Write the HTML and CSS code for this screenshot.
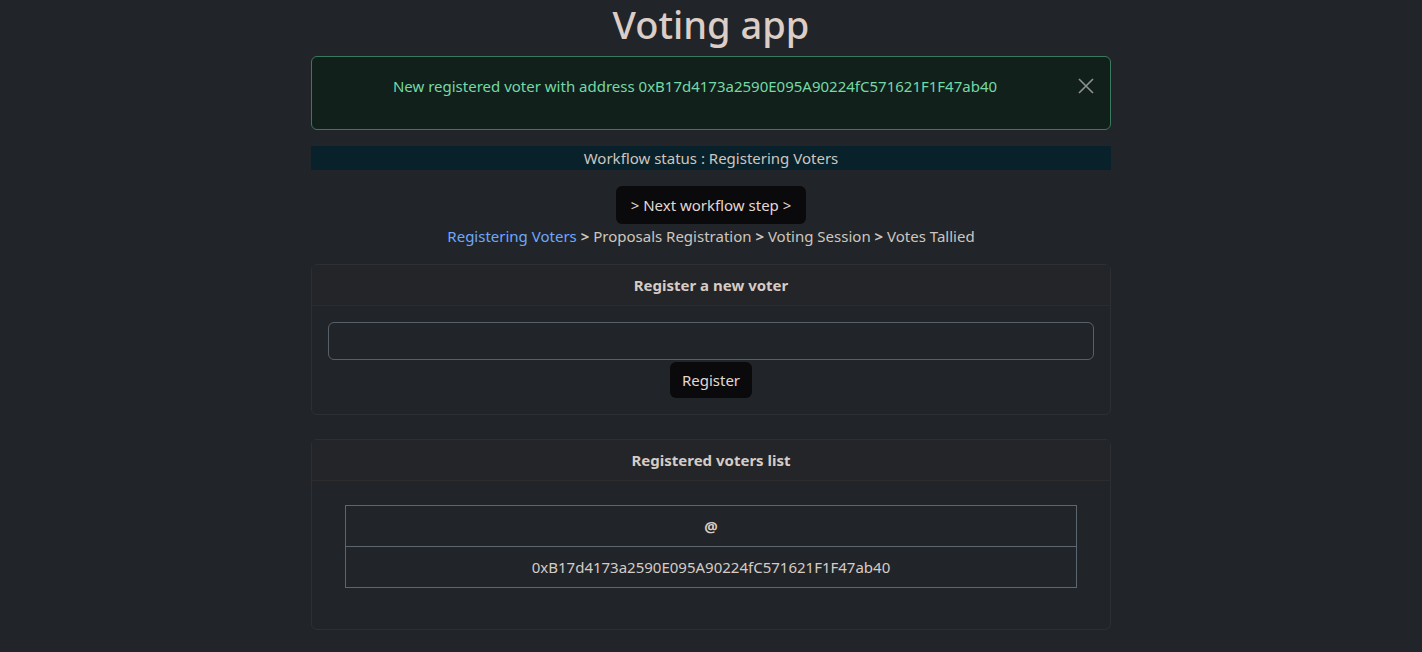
FILE: index.html
```html
<!DOCTYPE html>
<html lang="en">
<head>
<meta charset="utf-8">
<title>Voting app</title>
<link rel="stylesheet" href="styles.css">
</head>
<body>
<div class="container">
  <h1 class="title">Voting app</h1>
  <div class="alert">
    <p class="alert-text">New registered voter with address 0xB17d4173a2590E095A90224fC571621F1F47ab40</p>
    <button class="btn-close" aria-label="Close">
      <svg width="16" height="16" viewBox="0 0 16 16"><path d="M1 1 L15 15 M15 1 L1 15" stroke="currentColor" stroke-width="1.6" fill="none"/></svg>
    </button>
  </div>
  <div class="status">Workflow status : Registering Voters</div>
  <div class="next-wrap"><button class="btn-dark btn-next">&gt; Next workflow step &gt;</button></div>
  <div class="steps">
    <span class="step-active">Registering Voters</span> <b class="sep">&gt;</b> Proposals Registration <b class="sep">&gt;</b> Voting Session <b class="sep">&gt;</b> Votes Tallied
  </div>
  <div class="card">
    <div class="card-header">Register a new voter</div>
    <div class="card-body form-body">
      <input class="form-input" type="text">
      <button class="btn-dark">Register</button>
    </div>
  </div>
  <div class="card">
    <div class="card-header">Registered voters list</div>
    <div class="card-body table-body">
      <table class="voters">
        <thead><tr><th>@</th></tr></thead>
        <tbody><tr><td>0xB17d4173a2590E095A90224fC571621F1F47ab40</td></tr></tbody>
      </table>
    </div>
  </div>
</div>
</body>
</html>
```

FILE: styles.css
```css
* { box-sizing: border-box; }
html, body { margin: 0; padding: 0; }
body {
  background: #212529;
  color: #cfc5bf;
  font-family: "Noto Sans", "Open Sans", sans-serif;
  font-size: 15px;
  line-height: 24px;
}
.container {
  width: 800px;
  margin: 0 auto;
  text-align: center;
}
.title {
  margin: 0 0 8px;
  font-size: 38px;
  line-height: 48px;
  font-weight: 500;
  color: #dccdc7;
}
.alert {
  position: relative;
  background: #12201b;
  border: 1px solid #3a7a5b;
  border-radius: 6px;
  padding: 17px 48px 16px 16px;
  margin-bottom: 16px;
  color: #74d9a6;
}
.alert-text { margin: 0 0 15px; }
.btn-close {
  position: absolute;
  top: 0;
  right: 0;
  padding: 21px 16px;
  background: none;
  border: 0;
  color: #8f9290;
  line-height: 0;
}
.status {
  background: #08212a;
  height: 24px;
  line-height: 25px;
  margin-bottom: 16px;
}
.next-wrap { line-height: 0; }
.btn-dark {
  background: #0a0a0c;
  color: #e3d8d2;
  border: 0;
  border-radius: 6px;
  font-family: inherit;
  font-size: 15px;
  line-height: 24px;
  padding: 6px 12px;
}
.btn-next { padding: 7px 15px; }
.steps { line-height: 24px; margin-bottom: 16px; margin-top: 0; }
.step-active { color: #6ea8fe; }
.sep { font-weight: 700; }
.card {
  border: 1px solid #2c2f33;
  border-radius: 6px;
  margin-bottom: 24px;
}
.card-header {
  font-weight: 700;
  color: #d6cbc5;
  padding: 8px 16px;
  border-bottom: 1px solid #2d2b2b;
  background: #232528;
}
.form-body { padding: 16px; line-height: 0; }
.form-input {
  display: block;
  width: 100%;
  height: 38px;
  background: #212529;
  border: 1px solid #56606b;
  border-radius: 6px;
  margin-bottom: 2px;
}
.table-body { padding: 24px 33px 24px 33px; }
.voters {
  width: 100%;
  border-collapse: collapse;
  margin-bottom: 17px;
  border: 1px solid #5b6670;
}
.voters th, .voters td {
  border: 1px solid #5b6670;
  padding: 8px;
  text-align: center;
  line-height: 24px;
}
.voters th { font-weight: 700; color: #d8cdc7; }
.voters td { color: #d6ccc6; }
```
